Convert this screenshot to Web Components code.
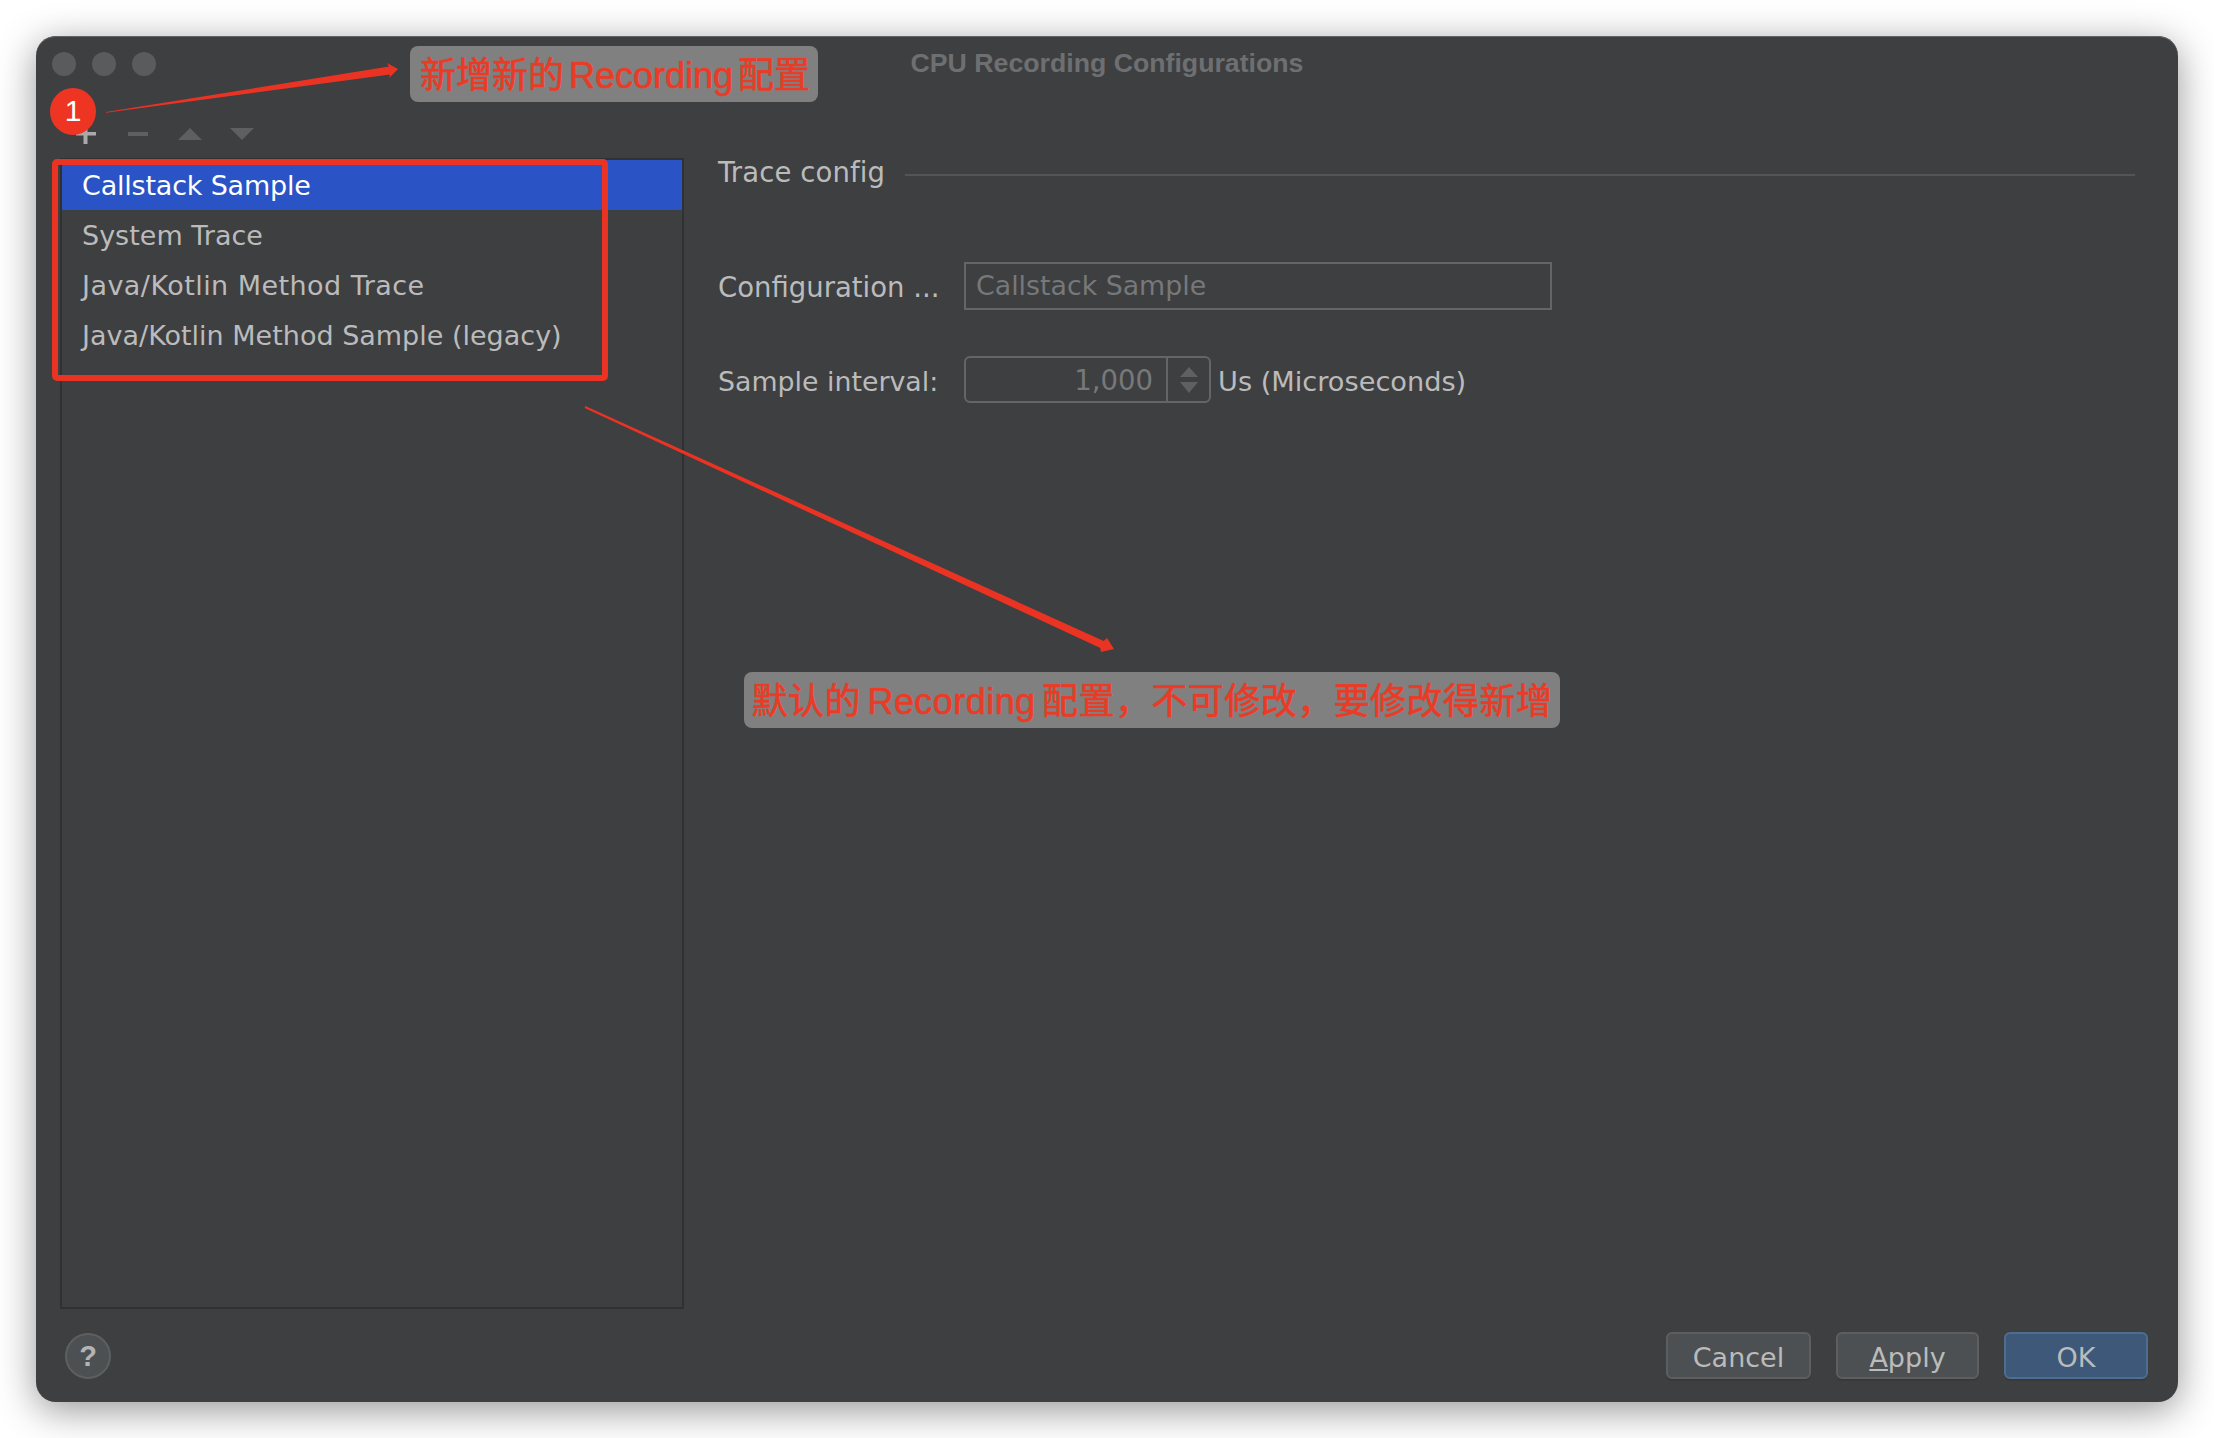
<!DOCTYPE html>
<html>
<head>
<meta charset="utf-8">
<title>CPU Recording Configurations</title>
<style>
html, body { margin: 0; background: #fff; }
body {
  width: 2214px;
  height: 1438px;
  box-sizing: border-box;
  padding: 36px;
  overflow: hidden;
  font-family: "DejaVu Sans", "Noto Sans CJK SC", sans-serif;
}
</style>
</head>
<body>
<cpu-dialog>
  <span slot="title">CPU Recording Configurations</span>
  <config-toolbar slot="toolbar"></config-toolbar>
  <config-list slot="list">
    <config-row selected style="letter-spacing:-0.2px">Callstack Sample</config-row>
    <config-row>System Trace</config-row>
    <config-row style="letter-spacing:0.45px">Java/Kotlin Method Trace</config-row>
    <config-row>Java/Kotlin Method Sample (legacy)</config-row>
  </config-list>
  <trace-form slot="form"></trace-form>
  <help-button slot="help"></help-button>
  <dialog-button slot="buttons" style="width:145px">Cancel</dialog-button>
  <dialog-button slot="buttons" style="width:143px"><u>A</u>pply</dialog-button>
  <dialog-button slot="buttons" default>OK</dialog-button>
  <annotation-layer slot="overlay">
    <annotation-note style="left:374px;top:10px;width:408px;height:56px;padding-left:2px;word-spacing:-5px">新增新的 Recording 配置</annotation-note>
    <annotation-note style="left:708px;top:636px;width:816px;height:56px;letter-spacing:0.45px">默认的 Recording 配置&#xFF0C;不可修改&#xFF0C;要修改得新增</annotation-note>
  </annotation-layer>
</cpu-dialog>

<script>
const dialogTemplate = document.createElement("template");
dialogTemplate.innerHTML = `
<style>
:host {
  display: flex;
  flex-direction: column;
  position: relative;
  width: 2142px;
  height: 1366px;
  background: #3e3f41;
  border-radius: 20px;
  box-shadow: 0 8px 38px rgba(0, 0, 0, 0.42), inset 0 1px 0 #636466;
  color: #bbbbbb;
  font-size: 27px;
}
.titlebar {
  flex: none;
  position: relative;
  display: flex;
  align-items: center;
  height: 56px;
  padding-left: 16px;
}
.lights { display: flex; gap: 16px; }
.lights i { width: 24px; height: 24px; border-radius: 50%; background: #5a5b5d; }
.title {
  position: absolute;
  left: 0;
  right: 0;
  top: 12px;
  text-align: center;
  font: bold 26.700px "Liberation Sans", sans-serif;
  color: #6e6f71;
}
.toolbar { flex: none; height: 66px; }
.main { flex: 1; min-height: 0; display: flex; padding-left: 24px; padding-right: 43px; gap: 34px; }
.list { flex: none; width: 624px; display: flex; }
.form { flex: 1; min-width: 0; }
.footer {
  flex: none;
  display: flex;
  align-items: flex-start;
  justify-content: space-between;
  height: 91px;
  box-sizing: border-box;
  padding: 21px 30px 0 29px;
}
.buttons { display: flex; gap: 25px; }
</style>
<div class="titlebar">
  <div class="lights"><i></i><i></i><i></i></div>
  <div class="title"><slot name="title"></slot></div>
</div>
<div class="toolbar"><slot name="toolbar"></slot></div>
<div class="main">
  <div class="list"><slot name="list"></slot></div>
  <div class="form"><slot name="form"></slot></div>
</div>
<div class="footer">
  <slot name="help"></slot>
  <div class="buttons"><slot name="buttons"></slot></div>
</div>
<slot name="overlay"></slot>
`;

class CpuDialog extends HTMLElement {
  constructor() {
    super();
    const root = this.attachShadow({ mode: "open" });
    root.appendChild(dialogTemplate.content.cloneNode(true));
  }
}

const toolbarTemplate = document.createElement("template");
toolbarTemplate.innerHTML = `
<style>
:host { display: block; height: 100%; }
svg { display: block; }
</style>
<svg width="300" height="66" viewBox="36 92 300 66">
  <path d="M76 132h20v3.500H76zM83.500 120h4v24h-4z" fill="#a9a9a9"/>
  <path d="M128 132h20v4h-20z" fill="#5e5f60"/>
  <path d="M190 128l12 12h-24z" fill="#5e5f60"/>
  <path d="M230 128h24l-12 12z" fill="#5e5f60"/>
</svg>
`;

class ConfigToolbar extends HTMLElement {
  constructor() {
    super();
    const root = this.attachShadow({ mode: "open" });
    root.appendChild(toolbarTemplate.content.cloneNode(true));
  }
}

const listTemplate = document.createElement("template");
listTemplate.innerHTML = `
<style>
:host {
  display: block;
  box-sizing: border-box;
  width: 624px;
  height: 1151px;
  border: 2px solid #2f3133;
}
</style>
<slot></slot>
`;

class ConfigList extends HTMLElement {
  constructor() {
    super();
    const root = this.attachShadow({ mode: "open" });
    root.appendChild(listTemplate.content.cloneNode(true));
  }
}

const rowTemplate = document.createElement("template");
rowTemplate.innerHTML = `
<style>
:host {
  display: flex;
  align-items: center;
  box-sizing: border-box;
  height: 50px;
  padding-left: 20px;
  padding-top: 1px;
  white-space: nowrap;
  color: #bbbbbb;
}
:host([selected]) {
  background: #2a53c6;
  color: #ffffff;
}
</style>
<slot></slot>
`;

class ConfigRow extends HTMLElement {
  constructor() {
    super();
    const root = this.attachShadow({ mode: "open" });
    root.appendChild(rowTemplate.content.cloneNode(true));
  }
}

const formTemplate = document.createElement("template");
formTemplate.innerHTML = `
<style>
:host { display: block; font-size: 27.500px; }
.heading {
  display: flex;
  align-items: center;
  gap: 20px;
  height: 32px;
  white-space: nowrap;
}
.heading span { position: relative; top: -2px; letter-spacing: 0.1px; }
.heading i { flex: 1; height: 2px; margin-top: 2px; background: #545556; }
.grid {
  display: grid;
  grid-template-columns: 246px 588px;
  grid-template-rows: 48px 47px;
  row-gap: 46px;
  align-items: center;
  margin-top: 72px;
  white-space: nowrap;
}
.label-text { padding-top: 2px; }
.small { font-size: 26.800px; padding-top: 3px; }
.input {
  box-sizing: border-box;
  height: 48px;
  line-height: 44px;
  padding-left: 10px;
  border: 2px solid #646567;
  font-size: 26.800px;
  color: #77787a;
}
.spin-line { display: flex; align-items: center; gap: 7px; }
.unit { font-size: 27.200px; padding-top: 3px; }
</style>
<div class="heading"><span>Trace config</span><i></i></div>
<div class="grid">
  <span class="label-text">Configuration ...</span>
  <div class="input">Callstack Sample</div>
  <span class="label-text small">Sample interval:</span>
  <div class="spin-line"><spin-box>1,000</spin-box><span class="label-text unit">Us (Microseconds)</span></div>
</div>
`;

class TraceForm extends HTMLElement {
  constructor() {
    super();
    const root = this.attachShadow({ mode: "open" });
    root.appendChild(formTemplate.content.cloneNode(true));
  }
}

const spinTemplate = document.createElement("template");
spinTemplate.innerHTML = `
<style>
:host {
  display: flex;
  box-sizing: border-box;
  width: 247px;
  height: 47px;
  border: 2px solid #646567;
  border-radius: 6px;
  color: #77787a;
}
.value {
  flex: none;
  box-sizing: border-box;
  width: 202px;
  padding-right: 13px;
  padding-top: 2px;
  line-height: 41px;
  text-align: right;
  border-right: 2px solid #646567;
}
.arrows { flex: 1; display: flex; align-items: center; justify-content: center; }
</style>
<div class="value"><slot></slot></div>
<div class="arrows">
  <svg width="18" height="26" viewBox="0 0 18 26">
    <path d="M9 0l9 10H0z" fill="#5f6061"/>
    <path d="M0 15h18l-9 11z" fill="#5f6061"/>
  </svg>
</div>
`;

class SpinBox extends HTMLElement {
  constructor() {
    super();
    const root = this.attachShadow({ mode: "open" });
    root.appendChild(spinTemplate.content.cloneNode(true));
  }
}

const helpTemplate = document.createElement("template");
helpTemplate.innerHTML = `
<style>
:host {
  display: flex;
  align-items: center;
  justify-content: center;
  box-sizing: border-box;
  width: 46px;
  height: 46px;
  margin-top: 1px;
  border: 2px solid #5e6060;
  border-radius: 50%;
  background: #4c5052;
  color: #b4b4b4;
  font: bold 29px "Liberation Sans", sans-serif;
}
</style>
?
`;

class HelpButton extends HTMLElement {
  constructor() {
    super();
    const root = this.attachShadow({ mode: "open" });
    root.appendChild(helpTemplate.content.cloneNode(true));
  }
}

const buttonTemplate = document.createElement("template");
buttonTemplate.innerHTML = `
<style>
:host {
  display: flex;
  align-items: center;
  justify-content: center;
  box-sizing: border-box;
  width: 144px;
  height: 47px;
  padding-top: 3px;
  border: 2px solid #5c5e60;
  border-radius: 6px;
  background: #4c5052;
  color: #bbbbbb;
  box-shadow: 0 2px 0 #38393b;
}
:host([default]) {
  background: #3d5878;
  border-color: #4d6d92;
}
</style>
<slot></slot>
`;

class DialogButton extends HTMLElement {
  constructor() {
    super();
    const root = this.attachShadow({ mode: "open" });
    root.appendChild(buttonTemplate.content.cloneNode(true));
  }
}

const noteTemplate = document.createElement("template");
noteTemplate.innerHTML = `
<style>
:host {
  position: absolute;
  display: flex;
  align-items: center;
  justify-content: center;
  box-sizing: border-box;
  padding-bottom: 4px;
  background: #808080;
  border-radius: 8px;
  color: #ea3b26;
  white-space: nowrap;
  word-spacing: -4px;
  -webkit-text-stroke: 0.6px #ea3b26;
  font: 36px "Liberation Sans", "Noto Sans CJK SC", sans-serif;
}
</style>
<slot></slot>
`;

class AnnotationNote extends HTMLElement {
  constructor() {
    super();
    const root = this.attachShadow({ mode: "open" });
    root.appendChild(noteTemplate.content.cloneNode(true));
  }
}

const layerTemplate = document.createElement("template");
layerTemplate.innerHTML = `
<style>
:host { position: absolute; left: 0; top: 0; width: 2142px; height: 1366px; pointer-events: none; }
svg { position: absolute; left: 0; top: 0; }
.badge {
  position: absolute;
  left: 14px;
  top: 52px;
  width: 46px;
  height: 47px;
  border-radius: 50%;
  background: #ee3524;
  color: #fff;
  font: 30px/45px "Liberation Sans", sans-serif;
  text-align: center;
}
</style>
<svg width="2142" height="1366" viewBox="36 36 2142 1366">
  <rect x="55" y="162" width="550" height="216" rx="2" fill="none" stroke="#ea3323" stroke-width="6"/>
  <path d="M106 112L389 66.500 387 63 398 69 389 78 390 74.500 106 112.800z" fill="#ea3323"/>
  <path d="M585.400 406L1103.700 640.900 1107 638 1114 649 1101 652 1100.300 648.100 584.600 408z" fill="#ea3323"/>
</svg>
<div class="badge">1</div>
<slot></slot>
`;

class AnnotationLayer extends HTMLElement {
  constructor() {
    super();
    const root = this.attachShadow({ mode: "open" });
    root.appendChild(layerTemplate.content.cloneNode(true));
  }
}

customElements.define("cpu-dialog", CpuDialog);
customElements.define("config-toolbar", ConfigToolbar);
customElements.define("config-list", ConfigList);
customElements.define("config-row", ConfigRow);
customElements.define("trace-form", TraceForm);
customElements.define("spin-box", SpinBox);
customElements.define("help-button", HelpButton);
customElements.define("dialog-button", DialogButton);
customElements.define("annotation-note", AnnotationNote);
customElements.define("annotation-layer", AnnotationLayer);
</script>
</body>
</html>
